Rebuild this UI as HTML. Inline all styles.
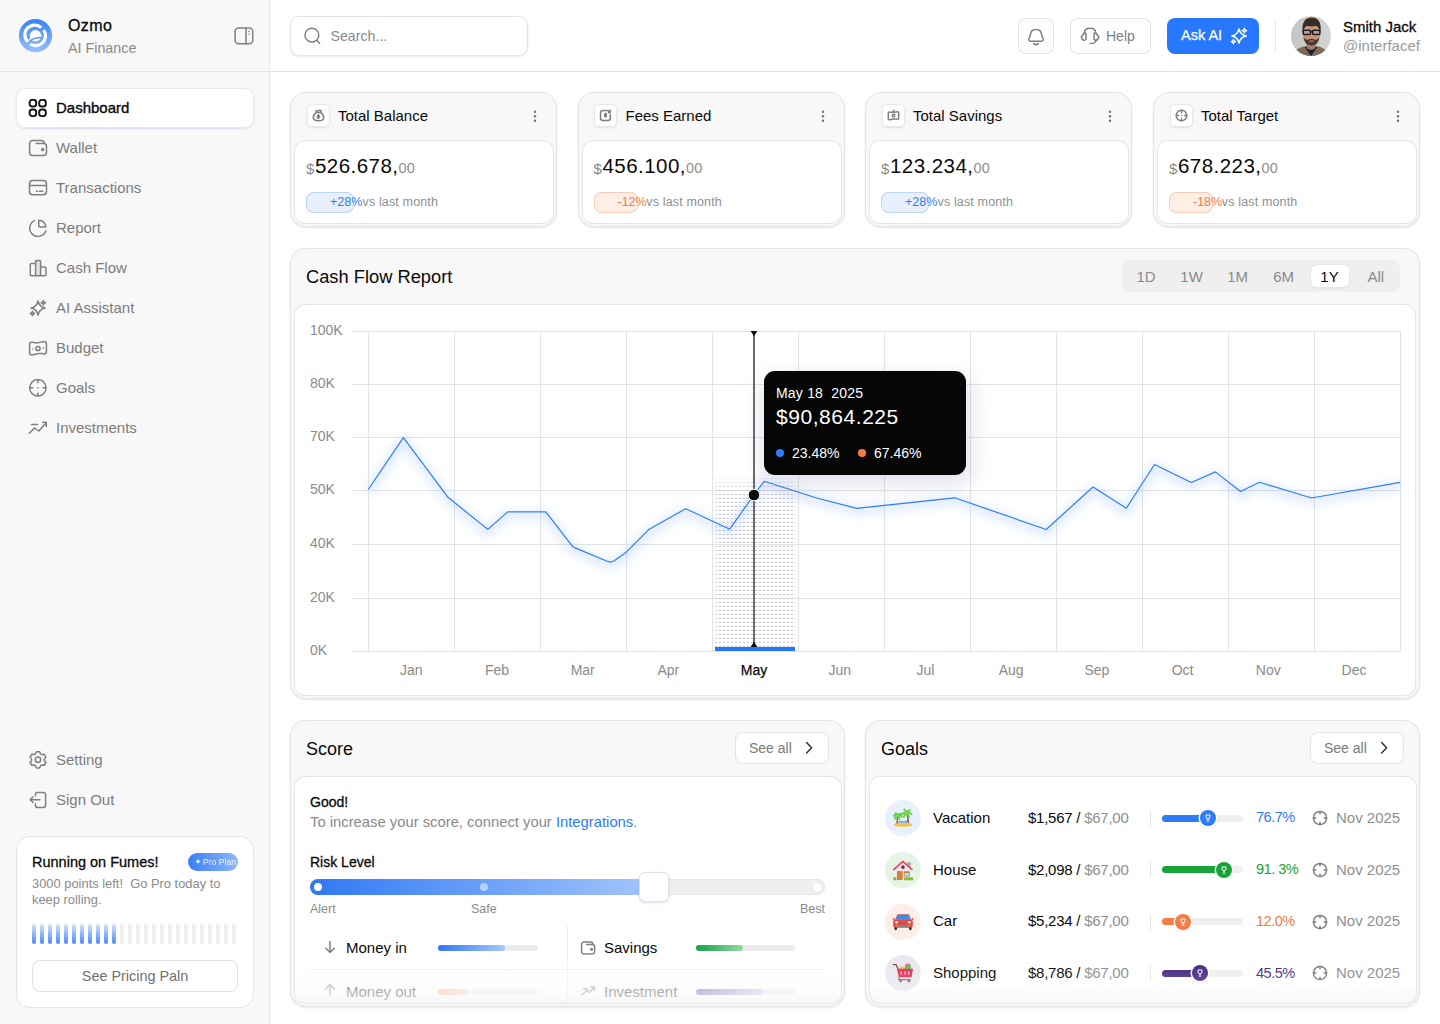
<!DOCTYPE html>
<html><head><meta charset="utf-8"><style>
*{box-sizing:border-box;margin:0;padding:0}
html,body{width:1440px;height:1024px;overflow:hidden;background:#fff;font-family:"Liberation Sans",sans-serif;color:#0a0a0a}
.a{position:absolute}
.t{position:absolute;white-space:nowrap;line-height:1}
#side{position:absolute;left:0;top:0;width:270px;height:1024px;background:#f8f8f8;border-right:1px solid #e7e7e7}
#sidehead{position:absolute;left:0;top:0;width:269px;height:72px;border-bottom:1px solid #e4e4e4}
#top{position:absolute;left:270px;top:0;width:1170px;height:72px;border-bottom:1px solid #e4e4e4;background:#fff}
.nav{position:absolute;left:16px;width:238px;height:40px;border-radius:9px;font-size:15px;color:#7d7d7d}
.nav svg{position:absolute;left:12px;top:11px}
.nav span{position:absolute;left:40px;top:12px;line-height:16px}
.nav.act span{-webkit-text-stroke:.35px #0a0a0a}
.nav.act{background:#fff;color:#0a0a0a;box-shadow:inset 0 0 0 1px #e6e7ea,0 1px 2px rgba(70,90,170,.16)}
.ic{fill:none;stroke:#7f7f7f;stroke-width:1.5;stroke-linecap:round;stroke-linejoin:round}
.card{position:absolute;background:#f8f8f8;border-radius:16px;box-shadow:inset 0 0 0 1px #e4e4e6,0 1px 2px rgba(80,110,200,.16)}
.inner{position:absolute;background:#fff;border-radius:11px;box-shadow:inset 0 0 0 1px #e6e6e6}
.btn{position:absolute;background:#fff;border-radius:8px;box-shadow:inset 0 0 0 1px #e4e4e4}
</style></head><body>
<div id="side"><div id="sidehead">
<svg class="a" style="left:19px;top:19px" width="34" height="34" viewBox="0 0 34 34">
<defs><linearGradient id="lg" x1="0" y1="0" x2="0" y2="1"><stop offset="0" stop-color="#3680f7"/><stop offset="1" stop-color="#98c0fb"/></linearGradient></defs>
<circle cx="16.5" cy="16.7" r="16.6" fill="url(#lg)"/>
<path d="M22.3 8.6 A9.8 9.8 0 0 0 8.6 22.6" fill="none" stroke="#fff" stroke-width="3.2"/>
<path d="M24.6 11.1 A9.8 9.8 0 0 1 11.2 25" fill="none" stroke="#fff" stroke-width="3.2"/>
<circle cx="16.5" cy="16.7" r="5.7" fill="#fff"/>
<path d="M8.5 23.2 Q12.5 17 22.6 17.2" fill="none" stroke="#fff" stroke-width="1.4"/>
<path d="M10.2 22.8 Q13.5 18.6 22.8 18.5" fill="none" stroke="#5a96f8" stroke-width="1.6"/>
</svg>
<div class="t" style="left:68px;top:18px;font-size:16px;letter-spacing:.4px;color:#0a0a0a;-webkit-text-stroke:.3px #0a0a0a">Ozmo</div>
<div class="t" style="left:68px;top:40.6px;font-size:14.3px;color:#8a8a8a">AI Finance</div>
<svg class="a" style="left:234px;top:27px" width="20" height="18" viewBox="0 0 20 18"><rect x="1.1" y="1.1" width="17.6" height="15.6" rx="3.5" class="ic"/><path d="M12 1.2v15.6" class="ic"/><path d="M15 4.3v.1M15 7v.1" class="ic" stroke-width="1.4"/></svg>
</div>
<div class="nav act" style="top:88px"><svg width="20" height="20" viewBox="0 0 20 20"><g fill="none" stroke="#111" stroke-width="1.9" transform="translate(0,-.7)"><rect x="1.6" y="1.6" width="6.6" height="6.6" rx="2.6"/><rect x="11.2" y="1.6" width="6.6" height="6.6" rx="2.6"/><rect x="1.6" y="11.2" width="6.6" height="6.6" rx="2.6"/><rect x="11.2" y="11.2" width="6.6" height="6.6" rx="2.6"/></g></svg><span style="">Dashboard</span></div>
<div class="nav" style="top:128px"><svg width="20" height="20" viewBox="0 0 20 20"><path class="ic" d="M8.2 4.6H15.5a3 3 0 0 1 3 3V13.5a3 3 0 0 1-3 3H4.6a3 3 0 0 1-3-3V4.6a3 3 0 0 1 3-3H13.3a3 3 0 0 1 3 3"/><circle cx="14.6" cy="10.5" r="1" class="ic"/></svg><span style="">Wallet</span></div>
<div class="nav" style="top:168px"><svg width="20" height="20" viewBox="0 0 20 20"><rect x="1.5" y="1.6" width="17" height="14.2" rx="3.2" class="ic"/><path class="ic" d="M1.8 6.4h16.4M8.5 12.3h1M11.5 12.3h3.4"/></svg><span style="">Transactions</span></div>
<div class="nav" style="top:208px"><svg width="20" height="20" viewBox="0 0 20 20"><path class="ic" d="M6.5 1.6A8.3 8.3 0 1 0 17.9 11.7"/><path class="ic" d="M10.8 1.2V7a1 1 0 0 0 1 1H17.8A6.9 6.9 0 0 0 10.8 1.2z"/></svg><span style="">Report</span></div>
<div class="nav" style="top:248px"><svg width="20" height="20" viewBox="0 0 20 20"><path d="M7.6 2.4a1 1 0 0 1 1-1h3a1 1 0 0 1 1 1V16.7H7.6z" fill="#e2e2e2"/><path class="ic" d="M2.3 5.5a1 1 0 0 1 1-1H7.6V16.7H3.3a1 1 0 0 1-1-1zM7.6 16.7V2.4a1 1 0 0 1 1-1h3a1 1 0 0 1 1 1V16.7M12.6 7.9h4.3a1 1 0 0 1 1 1v6.8a1 1 0 0 1-1 1H7.6"/></svg><span style="">Cash Flow</span></div>
<div class="nav" style="top:288px"><svg width="20" height="20" viewBox="0 0 20 20"><path class="ic" d="M10.07 2.02C10.87 6.07 13.07 8.27 17.12 9.07C13.07 9.87 10.87 12.07 10.07 16.12C9.27 12.07 7.07 9.87 3.02 9.07C7.07 8.27 9.27 6.07 10.07 2.02z"/><path class="ic" stroke-width="1.4" d="M15.3 1.5Q15.6 3.4 17.5 3.7Q15.6 4 15.3 5.9Q15 4 13.1 3.7Q15 3.4 15.3 1.5z"/><path class="ic" stroke-width="1.4" d="M4.4 12.3Q4.7 14.2 6.6 14.5Q4.7 14.8 4.4 16.7Q4.1 14.8 2.2 14.5Q4.1 14.2 4.4 12.3z"/></svg><span style="">AI Assistant</span></div>
<div class="nav" style="top:328px"><svg width="20" height="20" viewBox="0 0 20 20"><g transform="translate(0,-.5)"><path class="ic" d="M1.6 5.5a1.8 1.8 0 0 1 1.8-1.8c2.5 0 4 1.2 6.6.6 2.8-.7 4.6-1.2 6.6-1.2a1.8 1.8 0 0 1 1.8 1.8v8.7a1.8 1.8 0 0 1-1.8 1.8c-2.5 0-4-1-6.6-.3-2.8.8-4.6 1.5-6.6 1.5a1.8 1.8 0 0 1-1.8-1.8z"/><circle cx="10" cy="10" r="2.1" class="ic"/><path class="ic" d="M4.8 10.5v.1M15.2 9.6v.1" stroke-width="1.8"/></g></svg><span style="">Budget</span></div>
<div class="nav" style="top:368px"><svg width="20" height="20" viewBox="0 0 20 20"><circle cx="9.9" cy="8.8" r="8.2" class="ic"/><path class="ic" d="M9.9 .9v2.8M9.9 13.9v2.8M2 8.8h2.8M15 8.8h2.8M9.9 8.8v.1"/></svg><span style="">Goals</span></div>
<div class="nav" style="top:408px"><svg width="20" height="20" viewBox="0 0 20 20"><path class="ic" d="M1.3 14.2L6.4 9L10.8 12L18.2 3.8M14.6 3.3H18.3V7.4M3.5 5.6H9.6"/></svg><span style="">Investments</span></div>
<div class="nav" style="top:740px"><svg width="20" height="20" viewBox="0 0 20 20"><path class="ic" d="M7.40 2.95 L8.42 0.65 L11.58 0.65 L12.60 2.95 L13.76 3.62 L16.26 3.35 L17.85 6.10 L16.36 8.13 L16.36 9.47 L17.85 11.50 L16.26 14.25 L13.76 13.98 L12.60 14.65 L11.58 16.95 L8.42 16.95 L7.40 14.65 L6.24 13.98 L3.74 14.25 L2.15 11.50 L3.64 9.47 L3.64 8.13 L2.15 6.10 L3.74 3.35 L6.24 3.62z"/><circle cx="10" cy="8.8" r="2.7" class="ic"/></svg><span style="">Setting</span></div>
<div class="nav" style="top:780px"><svg width="20" height="20" viewBox="0 0 20 20"><path class="ic" d="M7.4 4.8V3.6a2.2 2.2 0 0 1 2.2-2.2h5.8a2.2 2.2 0 0 1 2.2 2.2v10.6a2.2 2.2 0 0 1-2.2 2.2H9.6a2.2 2.2 0 0 1-2.2-2.2V12.8M11.9 8.7H2.2M5 5.9L2.2 8.7L5 11.5"/></svg><span style="">Sign Out</span></div>
<div class="a" style="left:16px;top:836px;width:238px;height:172px;background:#fff;border-radius:14px;box-shadow:inset 0 0 0 1px #e5e5e5">
<div class="t" style="left:16px;top:19px;font-size:14.5px;color:#0a0a0a;-webkit-text-stroke:.3px #0a0a0a">Running on Fumes!</div>
<div class="a" style="left:172px;top:17px;width:50px;height:18px;border-radius:9px;background:linear-gradient(90deg,#3a7ff6,#8db7fa)"><svg class="a" style="left:6px;top:5px" width="8" height="8" viewBox="0 0 8 8"><path d="M4 .5c.2 1.8 1.1 2.7 3 3-1.9.3-2.8 1.2-3 3-.2-1.8-1.1-2.7-3-3 1.9-.3 2.8-1.2 3-3z" fill="#fff"/></svg><div class="t" style="left:15px;top:5px;font-size:8.6px;color:#fff;opacity:.88">Pro Plan</div></div>
<div class="a" style="left:16px;top:40px;width:215px;font-size:12.9px;line-height:16px;color:#8a8a8a">3000 points left!&nbsp; Go Pro today to keep rolling.</div>
<div class="a" style="left:16px;top:88px;width:4px;height:20px;border-radius:2px;background:linear-gradient(180deg,#d2e2fd,#4d8cf7)"></div><div class="a" style="left:24px;top:88px;width:4px;height:20px;border-radius:2px;background:linear-gradient(180deg,#d2e2fd,#4d8cf7)"></div><div class="a" style="left:32px;top:88px;width:4px;height:20px;border-radius:2px;background:linear-gradient(180deg,#d2e2fd,#4d8cf7)"></div><div class="a" style="left:40px;top:88px;width:4px;height:20px;border-radius:2px;background:linear-gradient(180deg,#d2e2fd,#4d8cf7)"></div><div class="a" style="left:48px;top:88px;width:4px;height:20px;border-radius:2px;background:linear-gradient(180deg,#d2e2fd,#4d8cf7)"></div><div class="a" style="left:56px;top:88px;width:4px;height:20px;border-radius:2px;background:linear-gradient(180deg,#d2e2fd,#4d8cf7)"></div><div class="a" style="left:64px;top:88px;width:4px;height:20px;border-radius:2px;background:linear-gradient(180deg,#d2e2fd,#4d8cf7)"></div><div class="a" style="left:72px;top:88px;width:4px;height:20px;border-radius:2px;background:linear-gradient(180deg,#d2e2fd,#4d8cf7)"></div><div class="a" style="left:80px;top:88px;width:4px;height:20px;border-radius:2px;background:linear-gradient(180deg,#d2e2fd,#4d8cf7)"></div><div class="a" style="left:88px;top:88px;width:4px;height:20px;border-radius:2px;background:linear-gradient(180deg,#d2e2fd,#4d8cf7)"></div><div class="a" style="left:96px;top:88px;width:4px;height:20px;border-radius:2px;background:linear-gradient(180deg,#d2e2fd,#4d8cf7)"></div><div class="a" style="left:104px;top:88px;width:4px;height:20px;border-radius:2px;background:#efefef"></div><div class="a" style="left:112px;top:88px;width:4px;height:20px;border-radius:2px;background:#efefef"></div><div class="a" style="left:120px;top:88px;width:4px;height:20px;border-radius:2px;background:#efefef"></div><div class="a" style="left:128px;top:88px;width:4px;height:20px;border-radius:2px;background:#efefef"></div><div class="a" style="left:136px;top:88px;width:4px;height:20px;border-radius:2px;background:#efefef"></div><div class="a" style="left:144px;top:88px;width:4px;height:20px;border-radius:2px;background:#efefef"></div><div class="a" style="left:152px;top:88px;width:4px;height:20px;border-radius:2px;background:#efefef"></div><div class="a" style="left:160px;top:88px;width:4px;height:20px;border-radius:2px;background:#efefef"></div><div class="a" style="left:168px;top:88px;width:4px;height:20px;border-radius:2px;background:#efefef"></div><div class="a" style="left:176px;top:88px;width:4px;height:20px;border-radius:2px;background:#efefef"></div><div class="a" style="left:184px;top:88px;width:4px;height:20px;border-radius:2px;background:#efefef"></div><div class="a" style="left:192px;top:88px;width:4px;height:20px;border-radius:2px;background:#efefef"></div><div class="a" style="left:200px;top:88px;width:4px;height:20px;border-radius:2px;background:#efefef"></div><div class="a" style="left:208px;top:88px;width:4px;height:20px;border-radius:2px;background:#efefef"></div><div class="a" style="left:216px;top:88px;width:4px;height:20px;border-radius:2px;background:#efefef"></div>
<div class="a" style="left:16px;top:124px;width:206px;height:32px;border-radius:8px;box-shadow:inset 0 0 0 1px #e2e2e2"><div class="t" style="left:0;width:206px;text-align:center;top:8.9px;font-size:14.4px;color:#6f6f6f">See Pricing Paln</div></div>
</div>
</div>
<div id="top">
<div class="a" style="left:20px;top:16px;width:238px;height:40px;border-radius:9px;box-shadow:inset 0 0 0 1px #e3e5ea,0 1px 2px rgba(70,90,170,.14)">
<svg class="a" style="left:12px;top:10px" width="20" height="20" viewBox="0 0 20 20"><circle cx="9.9" cy="9.2" r="6.9" class="ic" stroke-width="1.5"/><path d="M15 14.4l2.6 2.8" class="ic" stroke-width="1.5"/></svg>
<div class="t" style="left:40.5px;top:12.9px;font-size:14.2px;color:#8a8a8a">Search...</div></div>
<div class="btn" style="left:748px;top:18px;width:36px;height:36px"><svg class="a" style="left:8px;top:8px" width="20" height="20" viewBox="0 0 20 20"><path class="ic" d="M10 3.4C6.5 3.4 4.5 5.8 4.4 9C4.3 10.6 3.8 11.2 3 12.2C2.2 13.4 2.9 15.1 4.6 15.2H15.4C17.1 15.1 17.8 13.4 17 12.2C16.2 11.2 15.7 10.6 15.6 9C15.5 5.8 13.5 3.4 10 3.4z"/><path class="ic" d="M7.6 17.6Q10 19.6 12.4 17.6"/></svg></div>
<div class="btn" style="left:800px;top:18px;width:81px;height:36px"><svg class="a" style="left:10px;top:8px" width="20" height="20" viewBox="0 0 20 20"><path class="ic" d="M4.3 7C4.5 3.5 7 2.2 10 2.2C13 2.2 15.5 3.5 15.8 7"/><path class="ic" d="M4.3 7L1.8 10.2C1.3 11 1.6 12.6 2.5 13.6C3.4 14.6 5.8 14.5 6 13V8.5C6 7.3 5 6.6 4.3 7z"/><path class="ic" d="M15.8 7L18.3 10.2C18.8 11 18.5 12.6 17.6 13.6C16.7 14.6 14.3 14.5 14 13V8.5C14 7.3 15 6.6 15.8 7z"/><path class="ic" d="M16.3 14C16 16.5 14 17.5 10.4 17.5"/></svg><div class="t" style="left:36px;top:10.8px;font-size:14px;color:#7f7f7f">Help</div></div>
<div class="a" style="left:897px;top:18px;width:92px;height:36px;border-radius:8px;background:#2878fe"><div class="t" style="left:14px;top:10.3px;font-size:14.5px;color:#fff;-webkit-text-stroke:.25px #fff">Ask AI</div><svg class="a" style="left:62px;top:8px" width="20" height="20" viewBox="0 0 20 20"><path d="M10 2.9C10.8 7 13 9.2 17.2 10C13 10.8 10.8 13 10 17.2C9.2 13 7 10.8 2.8 10C7 9.2 9.2 7 10 2.9z" fill="none" stroke="#fff" stroke-width="1.5" stroke-linejoin="round"/><path d="M15.4 2.3Q15.7 4.3 17.7 4.6Q15.7 4.9 15.4 6.9Q15.1 4.9 13.1 4.6Q15.1 4.3 15.4 2.3z" fill="none" stroke="#fff" stroke-width="1.3" stroke-linejoin="round"/><path d="M4.4 13.3Q4.7 15.3 6.7 15.6Q4.7 15.9 4.4 17.9Q4.1 15.9 2.1 15.6Q4.1 15.3 4.4 13.3z" fill="none" stroke="#fff" stroke-width="1.3" stroke-linejoin="round"/></svg></div>
<div class="a" style="left:1005px;top:20px;width:1px;height:32px;background:#e8e8e8"></div>
<svg class="a" style="left:1021px;top:16px" width="40" height="40" viewBox="0 0 40 40"><defs><clipPath id="avc"><circle cx="20" cy="20" r="20"/></clipPath><linearGradient id="avbg" x1="0" y1="0" x2="1" y2="0"><stop offset="0" stop-color="#c3c6c3"/><stop offset="1" stop-color="#d2d5d3"/></linearGradient></defs>
<g clip-path="url(#avc)"><rect width="40" height="40" fill="url(#avbg)"/>
<path d="M2 40c1.5-5 5-8 10-9.5l8 1.5 8-1.5c5 1.5 8.5 4.5 10 9.5z" fill="#7e6c58"/>
<path d="M13.5 31l6.5 9 6.5-9-3-1.5h-7z" fill="#1d2230"/>
<path d="M15.5 27h9v5c-1.5 1.2-3 1.8-4.5 1.8s-3-.6-4.5-1.8z" fill="#a87a62"/>
<ellipse cx="20.5" cy="19.6" rx="8.2" ry="10.8" fill="#c49880"/>
<path d="M12.6 20.5c.3 5.5 3.5 9.2 7.9 9.2s7.6-3.7 7.9-9.2c-1 2.4-3 3.4-4.2 3.2-1.2-.3-2.2-.9-3.7-.9s-2.5.6-3.7.9c-1.2.2-3.2-.8-4.2-3.2z" fill="#4a3a31"/>
<path d="M17.5 25.2c1-.5 2-.6 3-.6s2 .1 3 .6c-1 .6-2 .8-3 .8s-2-.2-3-.8z" fill="#b57a6e"/>
<path d="M11.6 16C10.6 6.5 14 1.4 20.6 1.4C27.2 1.4 30.6 5.8 29.6 16L28.3 15.2C28 11.8 26.5 10.2 24.6 10C22 10.6 19.2 10.6 16.6 10C14.6 10.3 13.2 11.9 12.9 15.2z" fill="#3a2d26"/>
<rect x="12.2" y="14.2" width="7.3" height="4.4" rx="1.2" fill="none" stroke="#1e1e1e" stroke-width="1.5"/>
<rect x="21.6" y="14.2" width="7.3" height="4.4" rx="1.2" fill="none" stroke="#1e1e1e" stroke-width="1.5"/>
<path d="M19.5 15.5h2.1" stroke="#1e1e1e" stroke-width="1.3"/>
</g></svg>
<div class="t" style="left:1073px;top:18.5px;font-size:15px;color:#0a0a0a;-webkit-text-stroke:.3px #0a0a0a">Smith Jack</div>
<div class="t" style="left:1073px;top:37.5px;font-size:15px;color:#9b9b9b">@interfacef</div>
</div>
<div class="card" style="left:290px;top:92px;width:267px;height:135px">
<div class="a" style="left:16.5px;top:12.3px;width:23px;height:23px;border-radius:5px;background:#fff;box-shadow:inset 0 0 0 1px #e8e8e8,0 1px 2px rgba(80,110,200,.16)"><div class="a" style="left:5px;top:5px;line-height:0"><svg width="13" height="13" viewBox="0 0 13 13"><path class="ic" stroke-width="1.1" d="M4.6 3.4L3.9 1.6c.9.5 1.6.5 2.6 0s1.7-.5 2.6 0l-.7 1.8M4.6 3.4h3.8c2 1.3 3.3 3 3.3 5 0 2.3-1.6 3.3-5.2 3.3S1.3 10.7 1.3 8.4c0-2 1.3-3.7 3.3-5z"/><path class="ic" stroke-width=".9" d="M7.2 6.6c-.3-.3-.6-.4-.9-.4-.5 0-.9.3-.9.7 0 .9 1.9.5 1.9 1.4 0 .4-.4.7-.9.7-.4 0-.7-.1-1-.4M6.4 5.7v.5M6.4 9v.5"/></svg></div></div>
<div class="t" style="left:48px;top:16.3px;font-size:15px;color:#0a0a0a">Total Balance</div>
<svg class="a" style="left:242px;top:18px" width="6" height="12" viewBox="0 0 6 12"><circle cx="3" cy="1.7" r="1.2" fill="#707070"/><circle cx="3" cy="6.2" r="1.2" fill="#707070"/><circle cx="3" cy="10.7" r="1.2" fill="#707070"/></svg>
<div class="inner" style="left:4px;top:48px;width:260px;height:84px">
<div class="t" style="left:12px;top:21px;font-size:15px;color:#8a8a8a">$</div>
<div class="t" style="left:21px;top:15.5px;font-size:20.5px;letter-spacing:.45px;color:#0a0a0a">526.678,<span style="font-size:14.5px;letter-spacing:.3px;color:#8f8f8f">00</span></div>
<div class="a" style="left:12px;top:52px;width:48px;height:21px;border-radius:8px;background:#e8f0fd;box-shadow:inset 0 0 0 1px #bcd3fa"></div>
<div class="t" style="left:36px;top:56px;font-size:12.5px;color:#2f7bf5">+28%</div>
<div class="t" style="left:68.5px;top:56px;font-size:12.5px;letter-spacing:.15px;color:#8f8f8f">vs last month</div>
</div></div>
<div class="card" style="left:577.5px;top:92px;width:267px;height:135px">
<div class="a" style="left:16.5px;top:12.3px;width:23px;height:23px;border-radius:5px;background:#fff;box-shadow:inset 0 0 0 1px #e8e8e8,0 1px 2px rgba(80,110,200,.16)"><div class="a" style="left:5px;top:5px;line-height:0"><svg width="13" height="13" viewBox="0 0 13 13"><path class="ic" stroke-width="1.1" d="M8.5 1.6H4a2.5 2.5 0 0 0-2.5 2.5v4.8A2.5 2.5 0 0 0 4 11.4h4.8a2.5 2.5 0 0 0 2.5-2.5V5.5M9.5 3.6l2.2-2.2M9.5 1.8v1.8h1.8"/><path class="ic" stroke-width=".9" d="M7.4 5.1c-.3-.3-.6-.4-.9-.4-.5 0-.9.3-.9.7 0 .9 1.9.5 1.9 1.4 0 .4-.4.7-.9.7-.4 0-.7-.1-1-.4M6.5 4.2v.5M6.5 7.5v.5"/></svg></div></div>
<div class="t" style="left:48px;top:16.3px;font-size:15px;color:#0a0a0a">Fees Earned</div>
<svg class="a" style="left:242px;top:18px" width="6" height="12" viewBox="0 0 6 12"><circle cx="3" cy="1.7" r="1.2" fill="#707070"/><circle cx="3" cy="6.2" r="1.2" fill="#707070"/><circle cx="3" cy="10.7" r="1.2" fill="#707070"/></svg>
<div class="inner" style="left:4px;top:48px;width:260px;height:84px">
<div class="t" style="left:12px;top:21px;font-size:15px;color:#8a8a8a">$</div>
<div class="t" style="left:21px;top:15.5px;font-size:20.5px;letter-spacing:.45px;color:#0a0a0a">456.100,<span style="font-size:14.5px;letter-spacing:.3px;color:#8f8f8f">00</span></div>
<div class="a" style="left:12px;top:52px;width:44px;height:21px;border-radius:8px;background:#fdeee6;box-shadow:inset 0 0 0 1px #f8cdb7"></div>
<div class="t" style="left:36px;top:56px;font-size:12.5px;color:#f47c45">-12%</div>
<div class="t" style="left:64.8px;top:56px;font-size:12.5px;letter-spacing:.15px;color:#8f8f8f">vs last month</div>
</div></div>
<div class="card" style="left:865px;top:92px;width:267px;height:135px">
<div class="a" style="left:16.5px;top:12.3px;width:23px;height:23px;border-radius:5px;background:#fff;box-shadow:inset 0 0 0 1px #e8e8e8,0 1px 2px rgba(80,110,200,.16)"><div class="a" style="left:5px;top:5px;line-height:0"><svg width="13" height="13" viewBox="0 0 13 13"><path class="ic" stroke-width="1.1" d="M1.3 4a1 1 0 0 1 1-1c1.5 0 2.5.6 4.2.3 1.7-.4 2.8-.6 4.2-.6a1 1 0 0 1 1 1v5.5a1 1 0 0 1-1 1c-1.5 0-2.5-.5-4.2-.2-1.7.4-2.8.8-4.2.8a1 1 0 0 1-1-1z"/><circle cx="6.5" cy="6.6" r="1.3" class="ic" stroke-width="1"/><path class="ic" d="M6.5 1.2v1.8" stroke-width="1.1"/></svg></div></div>
<div class="t" style="left:48px;top:16.3px;font-size:15px;color:#0a0a0a">Total Savings</div>
<svg class="a" style="left:242px;top:18px" width="6" height="12" viewBox="0 0 6 12"><circle cx="3" cy="1.7" r="1.2" fill="#707070"/><circle cx="3" cy="6.2" r="1.2" fill="#707070"/><circle cx="3" cy="10.7" r="1.2" fill="#707070"/></svg>
<div class="inner" style="left:4px;top:48px;width:260px;height:84px">
<div class="t" style="left:12px;top:21px;font-size:15px;color:#8a8a8a">$</div>
<div class="t" style="left:21px;top:15.5px;font-size:20.5px;letter-spacing:.45px;color:#0a0a0a">123.234,<span style="font-size:14.5px;letter-spacing:.3px;color:#8f8f8f">00</span></div>
<div class="a" style="left:12px;top:52px;width:48px;height:21px;border-radius:8px;background:#e8f0fd;box-shadow:inset 0 0 0 1px #bcd3fa"></div>
<div class="t" style="left:36px;top:56px;font-size:12.5px;color:#2f7bf5">+28%</div>
<div class="t" style="left:68.5px;top:56px;font-size:12.5px;letter-spacing:.15px;color:#8f8f8f">vs last month</div>
</div></div>
<div class="card" style="left:1153px;top:92px;width:267px;height:135px">
<div class="a" style="left:16.5px;top:12.3px;width:23px;height:23px;border-radius:5px;background:#fff;box-shadow:inset 0 0 0 1px #e8e8e8,0 1px 2px rgba(80,110,200,.16)"><div class="a" style="left:5px;top:5px;line-height:0"><svg width="13" height="13" viewBox="0 0 13 13"><circle cx="6.5" cy="6.5" r="5.3" class="ic" stroke-width="1.2"/><path class="ic" stroke-width="1.2" d="M6.5 1.3v2.2M6.5 9.5v2.2M1.3 6.5h2.2M9.5 6.5h2.2M6.5 6.4v.2"/></svg></div></div>
<div class="t" style="left:48px;top:16.3px;font-size:15px;color:#0a0a0a">Total Target</div>
<svg class="a" style="left:242px;top:18px" width="6" height="12" viewBox="0 0 6 12"><circle cx="3" cy="1.7" r="1.2" fill="#707070"/><circle cx="3" cy="6.2" r="1.2" fill="#707070"/><circle cx="3" cy="10.7" r="1.2" fill="#707070"/></svg>
<div class="inner" style="left:4px;top:48px;width:260px;height:84px">
<div class="t" style="left:12px;top:21px;font-size:15px;color:#8a8a8a">$</div>
<div class="t" style="left:21px;top:15.5px;font-size:20.5px;letter-spacing:.45px;color:#0a0a0a">678.223,<span style="font-size:14.5px;letter-spacing:.3px;color:#8f8f8f">00</span></div>
<div class="a" style="left:12px;top:52px;width:44px;height:21px;border-radius:8px;background:#fdeee6;box-shadow:inset 0 0 0 1px #f8cdb7"></div>
<div class="t" style="left:36px;top:56px;font-size:12.5px;color:#f47c45">-18%</div>
<div class="t" style="left:64.8px;top:56px;font-size:12.5px;letter-spacing:.15px;color:#8f8f8f">vs last month</div>
</div></div>
<div class="card" style="left:290px;top:248px;width:1130px;height:451px">
<div class="t" style="left:16px;top:19.8px;font-size:18.3px;color:#0a0a0a">Cash Flow Report</div>
<div class="a" style="left:832px;top:12px;width:278px;height:32px;border-radius:7px;background:#efefef"></div>
<div class="a" style="left:1021px;top:17px;width:38px;height:22px;border-radius:6px;background:#fff;box-shadow:0 0 0 1px #e8e8ec,0 1px 2px rgba(80,110,200,.2)"></div>
<div class="t" style="left:826px;width:60px;text-align:center;top:21px;font-size:15px;color:#8a8a8a">1D</div>
<div class="t" style="left:871.5999999999999px;width:60px;text-align:center;top:21px;font-size:15px;color:#8a8a8a">1W</div>
<div class="t" style="left:917.7px;width:60px;text-align:center;top:21px;font-size:15px;color:#8a8a8a">1M</div>
<div class="t" style="left:963.7px;width:60px;text-align:center;top:21px;font-size:15px;color:#8a8a8a">6M</div>
<div class="t" style="left:1009.5px;width:60px;text-align:center;top:21px;font-size:15px;color:#0a0a0a">1Y</div>
<div class="t" style="left:1055.8px;width:60px;text-align:center;top:21px;font-size:15px;color:#8a8a8a">All</div>
<div class="inner" style="left:4px;top:56px;width:1122px;height:392px"></div>
</div>
<svg class="a" style="left:0;top:0" width="1440" height="1024" viewBox="0 0 1440 1024"><defs>
<pattern id="dots" x="714.9" y="602" width="4" height="4" patternUnits="userSpaceOnUse"><rect x="0" y="0" width="2" height="1" fill="#c2c2c2"/></pattern>
<linearGradient id="fadeg" x1="0" y1="0" x2="0" y2="1"><stop offset="0" stop-color="#fff" stop-opacity=".85"/><stop offset="0.08" stop-color="#fff" stop-opacity="0"/></linearGradient>
<filter id="glow" x="-5%" y="-20%" width="110%" height="140%"><feGaussianBlur stdDeviation="5"/></filter>
<filter id="tsh" x="-50%" y="-80%" width="200%" height="260%"><feGaussianBlur stdDeviation="11"/></filter>
</defs><path d="M352 331.5H1401 M352 384.5H1401 M352 437.5H1401 M352 490.5H1401 M352 544.5H1401 M352 598.5H1401 M352 651.5H1401 M368.5 331V651 M454.5 331V651 M540.5 331V651 M626.5 331V651 M712.5 331V651 M798.5 331V651 M884.5 331V651 M970.5 331V651 M1056.5 331V651 M1142.5 331V651 M1228.5 331V651 M1314.5 331V651 M1400.5 331V651" stroke="#e3e3e3" stroke-width="1" fill="none"/><rect x="715.4" y="477" width="80" height="174" fill="url(#dots)"/><rect x="713" y="476" width="85" height="176" fill="url(#fadeg)"/><path d="M368.3,489.5 L403.4,437.7 L448,497.3 L487.8,529.4 L507.7,511.9 L545.9,511.9 L572.5,546.3 L574.5,547.6 L606.5,561.0 L609.2,561.9 L611.8,561.8 L614.2,560.7 L626.3,552.2 L649.2,529.2 L685.8,508.7 L729.7,529.2 L753.8,495 L764.2,481.3 L816.7,498 L856.7,508.3 L954.7,497.8 L1046.2,529.5 L1093,487 L1126.3,508.3 L1154.5,464.5 L1191.3,482.5 L1215.4,471.9 L1240.5,491.5 L1259.6,482.3 L1311.5,498 L1400.2,482.3" fill="none" stroke="#3b82f6" stroke-opacity=".2" stroke-width="7" filter="url(#glow)" transform="translate(0,3)"/><path d="M368.3,489.5 L403.4,437.7 L448,497.3 L487.8,529.4 L507.7,511.9 L545.9,511.9 L572.5,546.3 L574.5,547.6 L606.5,561.0 L609.2,561.9 L611.8,561.8 L614.2,560.7 L626.3,552.2 L649.2,529.2 L685.8,508.7 L729.7,529.2 L753.8,495 L764.2,481.3 L816.7,498 L856.7,508.3 L954.7,497.8 L1046.2,529.5 L1093,487 L1126.3,508.3 L1154.5,464.5 L1191.3,482.5 L1215.4,471.9 L1240.5,491.5 L1259.6,482.3 L1311.5,498 L1400.2,482.3" fill="none" stroke="#2f7dfb" stroke-width="1.2" stroke-linejoin="round"/><rect x="715" y="647" width="80" height="4" fill="#2277fd"/><path d="M754 333V645" stroke="#6b6b6b" stroke-width="2"/><path d="M750.6 331h6.8l-3.4 5.2z" fill="#0a0a0a"/><path d="M750.6 647h6.8l-3.4-5.2z" fill="#0a0a0a"/><circle cx="754" cy="495" r="5.8" fill="#0a0a0a" stroke="#fff" stroke-width="1"/><rect x="762" y="378" width="210" height="106" rx="14" fill="#6a78a0" opacity=".22" filter="url(#tsh)"/><rect x="764" y="371" width="202" height="104" rx="11" fill="#060606"/><circle cx="780" cy="453" r="4" fill="#2f7bf5"/><circle cx="862" cy="453" r="4" fill="#f47c45"/></svg>
<div class="t" style="left:310px;top:323.2px;font-size:14px;color:#8a8a8a">100K</div>
<div class="t" style="left:310px;top:376.2px;font-size:14px;color:#8a8a8a">80K</div>
<div class="t" style="left:310px;top:429.2px;font-size:14px;color:#8a8a8a">70K</div>
<div class="t" style="left:310px;top:482.2px;font-size:14px;color:#8a8a8a">50K</div>
<div class="t" style="left:310px;top:536.2px;font-size:14px;color:#8a8a8a">40K</div>
<div class="t" style="left:310px;top:590.2px;font-size:14px;color:#8a8a8a">20K</div>
<div class="t" style="left:310px;top:643.2px;font-size:14px;color:#8a8a8a">0K</div>
<div class="t" style="left:381.3px;width:60px;text-align:center;top:663px;font-size:14px;color:#8a8a8a">Jan</div>
<div class="t" style="left:467.0px;width:60px;text-align:center;top:663px;font-size:14px;color:#8a8a8a">Feb</div>
<div class="t" style="left:552.7px;width:60px;text-align:center;top:663px;font-size:14px;color:#8a8a8a">Mar</div>
<div class="t" style="left:638.4px;width:60px;text-align:center;top:663px;font-size:14px;color:#8a8a8a">Apr</div>
<div class="t" style="left:724.1px;width:60px;text-align:center;top:663px;font-size:14px;color:#0a0a0a;-webkit-text-stroke:.25px #0a0a0a">May</div>
<div class="t" style="left:809.8px;width:60px;text-align:center;top:663px;font-size:14px;color:#8a8a8a">Jun</div>
<div class="t" style="left:895.5px;width:60px;text-align:center;top:663px;font-size:14px;color:#8a8a8a">Jul</div>
<div class="t" style="left:981.2px;width:60px;text-align:center;top:663px;font-size:14px;color:#8a8a8a">Aug</div>
<div class="t" style="left:1066.9px;width:60px;text-align:center;top:663px;font-size:14px;color:#8a8a8a">Sep</div>
<div class="t" style="left:1152.6px;width:60px;text-align:center;top:663px;font-size:14px;color:#8a8a8a">Oct</div>
<div class="t" style="left:1238.3px;width:60px;text-align:center;top:663px;font-size:14px;color:#8a8a8a">Nov</div>
<div class="t" style="left:1324.0px;width:60px;text-align:center;top:663px;font-size:14px;color:#8a8a8a">Dec</div>
<div class="t" style="left:776px;top:386px;font-size:14px;letter-spacing:.2px;color:#fff">May 18&nbsp; 2025</div>
<div class="t" style="left:776px;top:406px;font-size:21px;letter-spacing:.55px;color:#fff">$90,864.225</div>
<div class="t" style="left:792px;top:446px;font-size:14px;color:#fff">23.48%</div>
<div class="t" style="left:874px;top:446px;font-size:14px;color:#fff">67.46%</div>
<div class="card" style="left:290px;top:720px;width:555px;height:287px">
<div class="t" style="left:16px;top:20px;font-size:18px;color:#0a0a0a">Score</div>
<div class="btn" style="left:445px;top:12px;width:94px;height:31.5px"><div class="t" style="left:14px;top:8.8px;font-size:14px;color:#7a7a7a">See all</div><svg class="a" style="left:67px;top:9px" width="14" height="14" viewBox="0 0 14 14"><path d="M4.6 1.6L9.6 6.8L4.6 12" fill="none" stroke="#333" stroke-width="1.5" stroke-linecap="round" stroke-linejoin="round"/></svg></div>
<div class="inner" style="left:4px;top:56px;width:548px;height:228px;overflow:hidden">
<div class="t" style="left:16px;top:19px;font-size:14px;color:#0a0a0a;-webkit-text-stroke:.3px #0a0a0a">Good!</div>
<div class="t" style="left:16px;top:39px;font-size:14.8px;color:#8a8a8a">To increase your score, connect your <span style="color:#2f7bf5">Integrations</span>.</div>
<div class="t" style="left:16px;top:79px;font-size:14px;color:#0a0a0a;-webkit-text-stroke:.3px #0a0a0a">Risk Level</div>
<div class="a" style="left:16px;top:103px;width:515px;height:16px;border-radius:8px;background:#efefef;box-shadow:inset 0 0 0 1px #e6e6e6"></div>
<div class="a" style="left:16px;top:103px;width:344px;height:16px;border-radius:8px 0 0 8px;background:linear-gradient(90deg,#2f78f5,#a5c6fb)"></div>
<div class="a" style="left:19.5px;top:106.8px;width:8px;height:8px;border-radius:50%;background:#fff"></div>
<div class="a" style="left:185.5px;top:106.8px;width:8px;height:8px;border-radius:50%;background:#fff;opacity:.5"></div>
<div class="a" style="left:518.5px;top:106.8px;width:8px;height:8px;border-radius:50%;background:#fff"></div>
<div class="a" style="left:345.4px;top:95.7px;width:29.2px;height:30px;border-radius:6px;background:#fff;box-shadow:inset 0 0 0 1px #dde2ec,0 1px 3px rgba(80,110,200,.22)"></div>
<div class="t" style="left:16px;top:127px;font-size:12.5px;color:#8a8a8a">Alert</div>
<div class="t" style="left:177px;top:127px;font-size:12.5px;color:#8a8a8a">Safe</div>
<div class="t" style="left:481px;width:50px;text-align:right;top:127px;font-size:12.5px;color:#8a8a8a">Best</div>
<div class="a" style="left:273px;top:150px;width:1px;height:80px;background:#ececec"></div>
<div class="a" style="left:16px;top:193px;width:515px;height:1px;background:#e8e8e8"></div>
<svg class="a" style="left:28px;top:163px" width="16" height="16" viewBox="0 0 16 16"><path class="ic" d="M8 2.5v11M3.8 9.3L8 13.5l4.2-4.2"/></svg>
<div class="t" style="left:52px;top:164.3px;font-size:15px;color:#0a0a0a">Money in</div>
<div class="a" style="left:144px;top:169px;width:100px;height:6px;border-radius:3px;background:#ececec"></div><div class="a" style="left:144px;top:169px;width:67px;height:6px;border-radius:3px;background:linear-gradient(90deg,#2f78f5,#a7c8fb)"></div>
<svg class="a" style="left:285.5px;top:163.5px" width="16" height="16" viewBox="0 0 16 16"><path class="ic" d="M6.6 4.4H12.3a2.3 2.3 0 0 1 2.3 2.3V11.6a2.3 2.3 0 0 1-2.3 2.3H3.9a2.3 2.3 0 0 1-2.3-2.3V4.3a2.3 2.3 0 0 1 2.3-2.3H10.6a2.3 2.3 0 0 1 2.3 2.3"/><circle cx="11.6" cy="9.2" r=".8" class="ic"/></svg>
<div class="t" style="left:310px;top:164.3px;font-size:15px;color:#0a0a0a">Savings</div>
<div class="a" style="left:402px;top:169px;width:99px;height:6px;border-radius:3px;background:#ececec"></div><div class="a" style="left:402px;top:169px;width:47px;height:6px;border-radius:3px;background:linear-gradient(90deg,#16a34a,#8fd8a2)"></div>
<svg class="a" style="left:28px;top:206px" width="16" height="16" viewBox="0 0 16 16"><path class="ic" d="M8 13.5v-11M3.8 6.7L8 2.5l4.2 4.2"/></svg>
<div class="t" style="left:52px;top:207.6px;font-size:15px;color:#0a0a0a">Money out</div>
<div class="a" style="left:144px;top:213px;width:100px;height:6px;border-radius:3px;background:#ececec"></div><div class="a" style="left:144px;top:213px;width:30px;height:6px;border-radius:3px;background:linear-gradient(90deg,#f4a07a,#fbd3c0)"></div>
<svg class="a" style="left:285.5px;top:206px" width="16" height="16" viewBox="0 0 16 16"><path class="ic" d="M1.5 13l5.5-4.5 2.2 2 5.3-5.5M11 5h3.5v3.5M3.5 7h3.8"/></svg>
<div class="t" style="left:310px;top:207.6px;font-size:15px;color:#0a0a0a">Investment</div>
<div class="a" style="left:402px;top:213px;width:99px;height:6px;border-radius:3px;background:#ececec"></div><div class="a" style="left:402px;top:213px;width:67px;height:6px;border-radius:3px;background:linear-gradient(90deg,#5b3fa3,#c9bfe3)"></div>
<div class="a" style="left:1px;top:176px;width:546px;height:51px;border-radius:0 0 10px 10px;background:linear-gradient(180deg,rgba(255,255,255,0) 0%,rgba(255,255,255,.5) 40%,rgba(250,250,250,.7) 85%,rgba(244,244,244,.8) 100%)"></div>
</div></div>
<div class="card" style="left:865px;top:720px;width:555px;height:287px">
<div class="t" style="left:16px;top:20px;font-size:18px;color:#0a0a0a">Goals</div>
<div class="btn" style="left:445px;top:12px;width:94px;height:31.5px"><div class="t" style="left:14px;top:8.8px;font-size:14px;color:#7a7a7a">See all</div><svg class="a" style="left:67px;top:9px" width="14" height="14" viewBox="0 0 14 14"><path d="M4.6 1.6L9.6 6.8L4.6 12" fill="none" stroke="#333" stroke-width="1.5" stroke-linecap="round" stroke-linejoin="round"/></svg></div>
<div class="inner" style="left:4px;top:56px;width:548px;height:228px;overflow:hidden">
<div class="a" style="left:16px;top:24.0px;width:36px;height:36px;border-radius:50%;background:#e9f0fd"><div class="a" style="left:6px;top:6px;line-height:0"><svg width="24" height="24" viewBox="0 0 24 24"><path d="M3 18.6c0-1.6 2.5-2.2 9-2.2s9.2.6 9.2 2.2-2.8 2.2-9.1 2.2S3 20.2 3 18.6z" fill="#f6c24f"/><path d="M6 16.6c1.5-1.2 3.5-2.2 5.5-1.6 2 .6 3.5-.6 5.8-.4v2z" fill="#45a6f2"/><path d="M6.2 17.6C6 14.5 6.3 12 6.8 9.8" stroke="#9a4f3a" stroke-width="1.3" fill="none"/><path d="M17.4 16.8C17.2 13 16.6 9.5 15.6 7" stroke="#9a4f3a" stroke-width="1.5" fill="none"/><g stroke="#63d04b" stroke-width="1.9" fill="none" stroke-linecap="round"><path d="M6.6 9.6C5.2 8.6 3.8 8.8 2.8 9.8M6.6 9.6C8.2 8.8 9.8 9.4 10.8 10.8M6.6 9.6C5.2 10.4 4.2 11.6 3.8 12.8M6.6 9.6C7.6 10.6 8.2 11.8 8.4 13M6.6 9.6C6.2 8.4 5.6 7.6 4.6 7.2M6.6 9.6C7.4 8.4 8.4 7.8 9.4 7.8"/><path d="M15.6 7C13.8 6.2 12 6.8 10.8 8.6M15.6 7C17.6 6.2 19.4 7 20.6 8.2M15.6 7C14 8.2 13 9.6 12.8 11M15.6 7C17 8.2 17.8 9.6 18 11M15.6 7C15.2 5.4 14.4 4.2 13.2 3.6M15.6 7C16.4 5.4 17.6 4.4 19 4.2"/></g><circle cx="6.6" cy="9.8" r=".9" fill="#f4b43a"/><circle cx="15.6" cy="7.2" r="1" fill="#f4b43a"/></svg></div></div>
<div class="t" style="left:64px;top:33.8px;font-size:15px;color:#0a0a0a">Vacation</div>
<div class="t" style="left:159px;top:33.8px;font-size:15px;letter-spacing:-.25px;color:#0a0a0a">$1,567 / <span style="color:#8f8f8f">$67,00</span></div>
<div class="a" style="left:281px;top:34.0px;width:1px;height:16px;background:#e6e6e6"></div>
<div class="a" style="left:293px;top:38.5px;width:81px;height:7px;border-radius:4px;background:#efefef"></div>
<div class="a" style="left:293px;top:38.5px;width:45.8px;height:7px;border-radius:4px 0 0 4px;background:#2f7bf5"></div>
<div class="a" style="left:330.8px;top:34.0px;width:16px;height:16px;border-radius:50%;background:#2f7bf5;box-shadow:0 0 0 1.5px #fff,0 1px 3px rgba(0,0,0,.2)"><svg class="a" style="left:4px;top:4px" width="8" height="8" viewBox="0 0 8 8"><path d="M2 1h4v1.8a2 2 0 0 1-4 0zM4 4.8V6M2.6 7h2.8" fill="none" stroke="#fff" stroke-width="1"/></svg></div>
<div class="t" style="left:387px;top:34.1px;font-size:14.6px;letter-spacing:-.55px;color:#2f7bf5">76.7%</div>
<svg class="a" style="left:443px;top:34.0px" width="16" height="16" viewBox="0 0 16 16"><circle cx="8" cy="8" r="6.6" class="ic" stroke-width="1.3"/><path class="ic" stroke-width="1.3" d="M8 1.5v2.3M8 12.2v2.3M1.5 8h2.3M12.2 8h2.3"/></svg>
<div class="t" style="left:467px;top:33.8px;font-size:15px;color:#8f8f8f">Nov 2025</div>
<div class="a" style="left:16px;top:75.8px;width:36px;height:36px;border-radius:50%;background:#e6f4e8"><div class="a" style="left:6px;top:6px;line-height:0"><svg width="24" height="24" viewBox="0 0 24 24"><rect x="16.2" y="4.1" width="3.5" height="4.5" fill="#9fb0bd"/><path d="M5 10.5L11.9 4.5L19 10.5V22H5z" fill="#ececf2"/><path d="M2.9 11.5L11.9 3.4L20.9 11.5" stroke="#ee4b5c" stroke-width="1.7" fill="none" stroke-linecap="round" stroke-linejoin="round"/><circle cx="11.9" cy="9.2" r="1.6" fill="#2b2b3a" stroke="#ee4b5c" stroke-width=".9"/><rect x="6" y="13.1" width="5.7" height="8.8" fill="#d9802c"/><rect x="12.7" y="13.3" width="6" height="5.2" fill="#c57a3a"/><rect x="13.4" y="15" width="4.6" height="2.8" fill="#a9dcf6"/><rect x="2.2" y="19.2" width="3.3" height="3" rx=".6" fill="#7cc23a"/><rect x="13" y="19.2" width="9" height="3" rx=".6" fill="#7cc23a"/></svg></div></div>
<div class="t" style="left:64px;top:85.6px;font-size:15px;color:#0a0a0a">House</div>
<div class="t" style="left:159px;top:85.6px;font-size:15px;letter-spacing:-.25px;color:#0a0a0a">$2,098 / <span style="color:#8f8f8f">$67,00</span></div>
<div class="a" style="left:281px;top:85.8px;width:1px;height:16px;background:#e6e6e6"></div>
<div class="a" style="left:293px;top:90.3px;width:81px;height:7px;border-radius:4px;background:#efefef"></div>
<div class="a" style="left:293px;top:90.3px;width:61.9px;height:7px;border-radius:4px 0 0 4px;background:#17a336"></div>
<div class="a" style="left:346.9px;top:85.8px;width:16px;height:16px;border-radius:50%;background:#17a336;box-shadow:0 0 0 1.5px #fff,0 1px 3px rgba(0,0,0,.2)"><svg class="a" style="left:4px;top:4px" width="8" height="8" viewBox="0 0 8 8"><path d="M2 1h4v1.8a2 2 0 0 1-4 0zM4 4.8V6M2.6 7h2.8" fill="none" stroke="#fff" stroke-width="1"/></svg></div>
<div class="t" style="left:387px;top:85.9px;font-size:14.6px;letter-spacing:-.55px;color:#17a336">91. 3%</div>
<svg class="a" style="left:443px;top:85.8px" width="16" height="16" viewBox="0 0 16 16"><circle cx="8" cy="8" r="6.6" class="ic" stroke-width="1.3"/><path class="ic" stroke-width="1.3" d="M8 1.5v2.3M8 12.2v2.3M1.5 8h2.3M12.2 8h2.3"/></svg>
<div class="t" style="left:467px;top:85.6px;font-size:15px;color:#8f8f8f">Nov 2025</div>
<div class="a" style="left:16px;top:127.6px;width:36px;height:36px;border-radius:50%;background:#fdefe8"><div class="a" style="left:6px;top:6px;line-height:0"><svg width="24" height="24" viewBox="0 0 24 24"><circle cx="2.6" cy="8.9" r="1" fill="#e84a4a"/><circle cx="21.4" cy="8.9" r="1" fill="#e84a4a"/><path d="M6.6 4.6H17.7L19.8 9.8H4.4z" fill="#3a8ee8" stroke="#e84a4a" stroke-width=".6"/><rect x="3.4" y="16" width="2.6" height="4.2" rx="1.1" fill="#333"/><rect x="18" y="16" width="2.6" height="4.2" rx="1.1" fill="#333"/><rect x="2.2" y="9.4" width="19.6" height="8" rx="2.2" fill="#e84a4a"/><ellipse cx="5.6" cy="12.2" rx="1.7" ry="1" fill="#fff3c4"/><ellipse cx="18.4" cy="12.2" rx="1.7" ry="1" fill="#fff3c4"/><rect x="8.2" y="12.4" width="7.6" height="1.7" rx=".5" fill="#8b6a6a"/><circle cx="5.6" cy="15.1" r=".8" fill="#f7a21e"/><circle cx="18.4" cy="15.1" r=".8" fill="#f7a21e"/><rect x="6.2" y="15.6" width="11.6" height="2.2" fill="#888"/></svg></div></div>
<div class="t" style="left:64px;top:137.4px;font-size:15px;color:#0a0a0a">Car</div>
<div class="t" style="left:159px;top:137.4px;font-size:15px;letter-spacing:-.25px;color:#0a0a0a">$5,234 / <span style="color:#8f8f8f">$67,00</span></div>
<div class="a" style="left:281px;top:137.6px;width:1px;height:16px;background:#e6e6e6"></div>
<div class="a" style="left:293px;top:142.1px;width:81px;height:7px;border-radius:4px;background:#efefef"></div>
<div class="a" style="left:293px;top:142.1px;width:21.4px;height:7px;border-radius:4px 0 0 4px;background:#f47c45"></div>
<div class="a" style="left:306.4px;top:137.6px;width:16px;height:16px;border-radius:50%;background:#f47c45;box-shadow:0 0 0 1.5px #fff,0 1px 3px rgba(0,0,0,.2)"><svg class="a" style="left:4px;top:4px" width="8" height="8" viewBox="0 0 8 8"><path d="M2 1h4v1.8a2 2 0 0 1-4 0zM4 4.8V6M2.6 7h2.8" fill="none" stroke="#fff" stroke-width="1"/></svg></div>
<div class="t" style="left:387px;top:137.7px;font-size:14.6px;letter-spacing:-.55px;color:#f47c45">12.0%</div>
<svg class="a" style="left:443px;top:137.6px" width="16" height="16" viewBox="0 0 16 16"><circle cx="8" cy="8" r="6.6" class="ic" stroke-width="1.3"/><path class="ic" stroke-width="1.3" d="M8 1.5v2.3M8 12.2v2.3M1.5 8h2.3M12.2 8h2.3"/></svg>
<div class="t" style="left:467px;top:137.4px;font-size:15px;color:#8f8f8f">Nov 2025</div>
<div class="a" style="left:16px;top:179.4px;width:36px;height:36px;border-radius:50%;background:#ebe9f0"><div class="a" style="left:6px;top:6px;line-height:0"><svg width="24" height="24" viewBox="0 0 24 24"><rect x="8" y="5.6" width="6.4" height="2.4" fill="#f4c85a"/><rect x="14" y="3.7" width="6" height="4.3" fill="#5cc46a"/><circle cx="15.8" cy="3.2" r=".8" fill="#e8335a"/><circle cx="17.8" cy="3.2" r=".8" fill="#e8335a"/><path d="M2.3 3.7H5.2L7 8.2" stroke="#8a4557" stroke-width="1.2" fill="none" stroke-linecap="round" stroke-linejoin="round"/><path d="M6 7.8H22L20.6 16.2H7.8z" fill="#e8335a"/><rect x="9.6" y="10.4" width="1.3" height="3.2" fill="#f6d6de"/><rect x="13.4" y="10.4" width="1.3" height="3.2" fill="#f6d6de"/><rect x="17" y="10.4" width="1.3" height="3.2" fill="#f6d6de"/><path d="M7.9 16.2L8.1 18.7H19.8" stroke="#8a4557" stroke-width="1.1" fill="none"/><circle cx="9.6" cy="19.9" r="1" fill="none" stroke="#8a4557" stroke-width="1"/><circle cx="17.9" cy="19.9" r="1" fill="none" stroke="#8a4557" stroke-width="1"/></svg></div></div>
<div class="t" style="left:64px;top:189.2px;font-size:15px;color:#0a0a0a">Shopping</div>
<div class="t" style="left:159px;top:189.2px;font-size:15px;letter-spacing:-.25px;color:#0a0a0a">$8,786 / <span style="color:#8f8f8f">$67,00</span></div>
<div class="a" style="left:281px;top:189.4px;width:1px;height:16px;background:#e6e6e6"></div>
<div class="a" style="left:293px;top:193.9px;width:81px;height:7px;border-radius:4px;background:#efefef"></div>
<div class="a" style="left:293px;top:193.9px;width:37.5px;height:7px;border-radius:4px 0 0 4px;background:#4b2f86"></div>
<div class="a" style="left:322.5px;top:189.4px;width:16px;height:16px;border-radius:50%;background:#4b2f86;box-shadow:0 0 0 1.5px #fff,0 1px 3px rgba(0,0,0,.2)"><svg class="a" style="left:4px;top:4px" width="8" height="8" viewBox="0 0 8 8"><path d="M2 1h4v1.8a2 2 0 0 1-4 0zM4 4.8V6M2.6 7h2.8" fill="none" stroke="#fff" stroke-width="1"/></svg></div>
<div class="t" style="left:387px;top:189.5px;font-size:14.6px;letter-spacing:-.55px;color:#4b2f86">45.5%</div>
<svg class="a" style="left:443px;top:189.4px" width="16" height="16" viewBox="0 0 16 16"><circle cx="8" cy="8" r="6.6" class="ic" stroke-width="1.3"/><path class="ic" stroke-width="1.3" d="M8 1.5v2.3M8 12.2v2.3M1.5 8h2.3M12.2 8h2.3"/></svg>
<div class="t" style="left:467px;top:189.2px;font-size:15px;color:#8f8f8f">Nov 2025</div>
<div class="a" style="left:1px;top:190px;width:546px;height:37px;border-radius:0 0 10px 10px;background:linear-gradient(180deg,rgba(255,255,255,0) 0%,rgba(255,255,255,.15) 50%,rgba(244,244,244,.7) 100%)"></div>
</div></div>
</body></html>
